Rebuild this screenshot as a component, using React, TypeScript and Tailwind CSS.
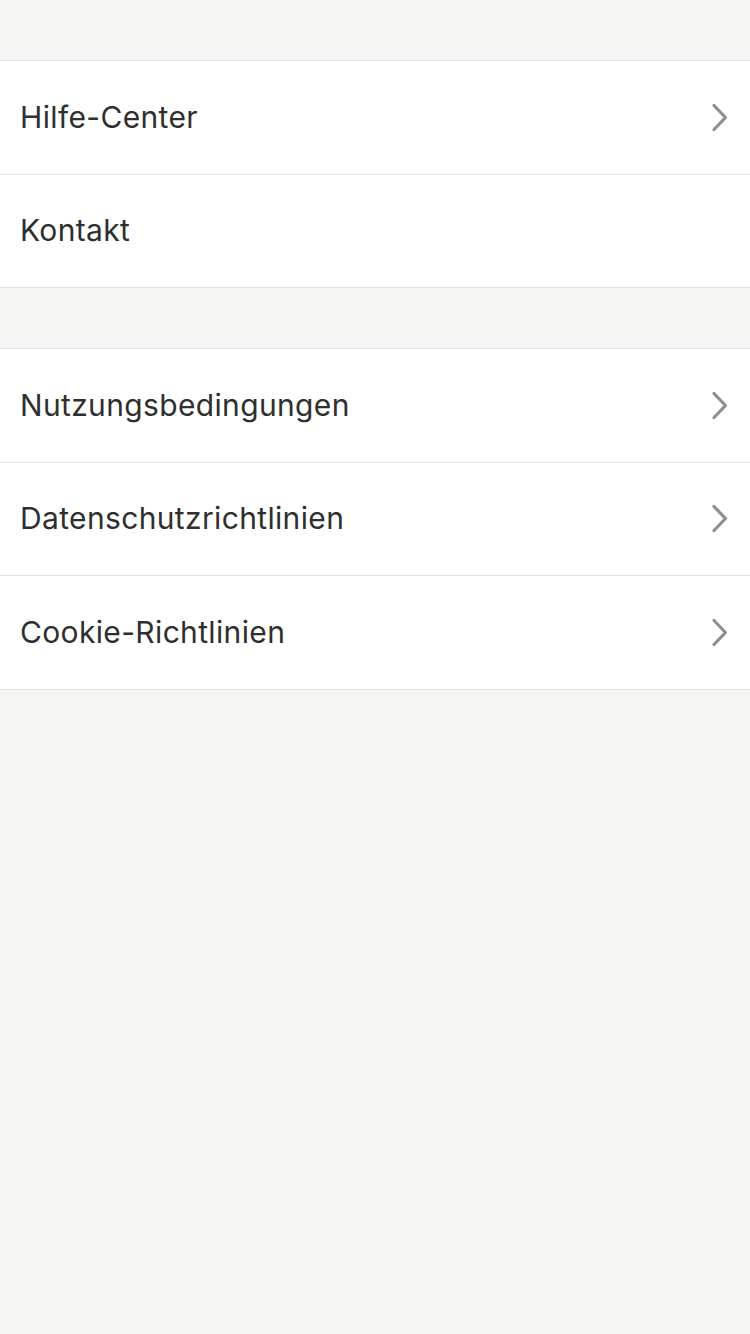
const groups: { label: string; chevron: boolean }[][] = [
  [
    { label: "Hilfe-Center", chevron: true },
    { label: "Kontakt", chevron: false },
  ],
  [
    { label: "Nutzungsbedingungen", chevron: true },
    { label: "Datenschutzrichtlinien", chevron: true },
    { label: "Cookie-Richtlinien", chevron: true },
  ],
];

function Chevron() {
  return (
    <svg width="18" height="29" viewBox="0 0 18 29" fill="none" className="mr-[21px]">
      <path d="M3 2.5 L14.5 14.5 L3 26.5" stroke="#8f8f8f" strokeWidth="3.2" strokeLinecap="round" strokeLinejoin="round" />
    </svg>
  );
}

export default function App() {
  return (
    <div className="min-h-[1334px] bg-[#f5f5f3] pt-[60px] font-['Inter',sans-serif]">
      {groups.map((rows, gi) => (
        <div key={gi} className="mb-[60px] border-t border-[#e3e3e1] bg-white">
          {rows.map((r) => (
            <div
              key={r.label}
              className="flex h-[113.5px] items-center justify-between border-b border-[#e3e3e1] pl-[20px]"
            >
              <span className="text-[30px] tracking-[0.35px] text-[#2f2f2f]">{r.label}</span>
              {r.chevron && <Chevron />}
            </div>
          ))}
        </div>
      ))}
    </div>
  );
}
